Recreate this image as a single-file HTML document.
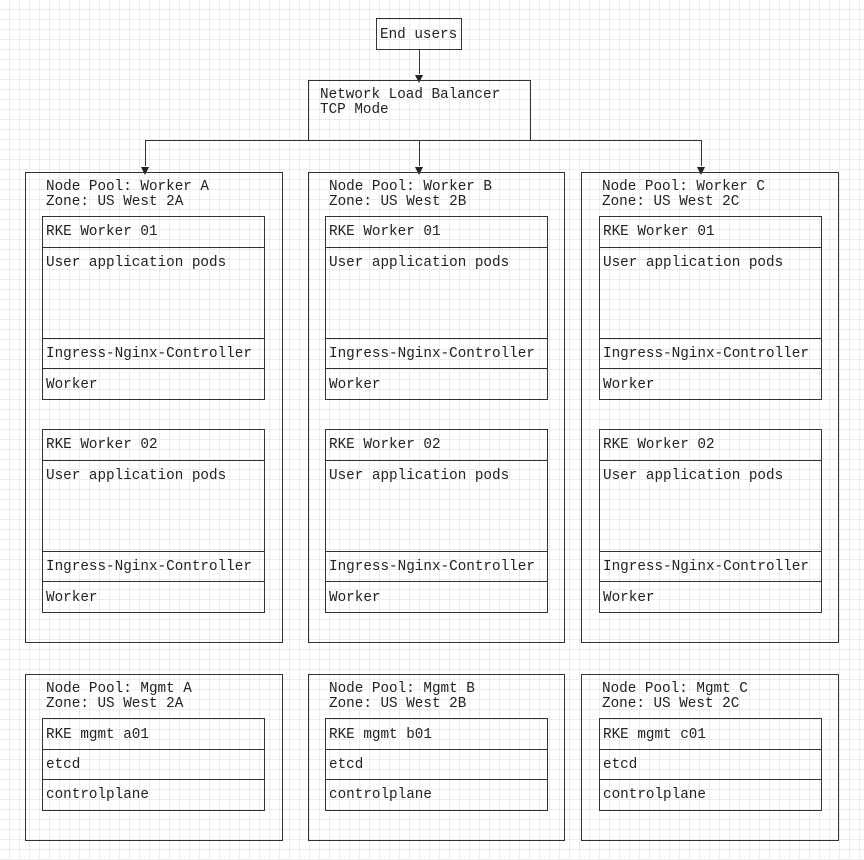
<!DOCTYPE html>
<html><head><meta charset="utf-8"><style>
body{margin:0;width:864px;height:860px;position:relative;overflow:hidden;background:#fff;
background-image:linear-gradient(#ececec 1px,transparent 1px),linear-gradient(90deg,#ececec 1px,transparent 1px);background-size:10px 10px;background-position:-1px -1px;
font-family:"Liberation Mono",monospace;font-size:14.3px;color:#222}
.b{position:absolute;border:1px solid #333;box-sizing:border-box}
.t{position:absolute;white-space:pre;line-height:15px}
.h{position:absolute;height:1px;background:#333}
.v{position:absolute;width:1px;background:#333}
.a{position:absolute;width:0;height:0;border-left:4px solid transparent;border-right:4px solid transparent;border-top:8px solid #222}
</style></head><body>
<div class="b" style="left:376px;top:18px;width:86px;height:32px"></div>
<div class="t" style="left:380px;top:28px">End users</div>
<div class="v" style="left:419px;top:50px;height:24px"></div>
<div class="a" style="left:415px;top:75px"></div>
<div class="b" style="left:308px;top:80px;width:223px;height:61px;border-bottom:none"></div>
<div class="t" style="left:320px;top:88px">Network Load Balancer
TCP Mode</div>
<div class="h" style="left:145px;top:140px;width:557px"></div>
<div class="v" style="left:145px;top:140px;height:26px"></div>
<div class="v" style="left:419px;top:140px;height:26px"></div>
<div class="v" style="left:701px;top:140px;height:26px"></div>
<div class="a" style="left:141px;top:167px"></div>
<div class="a" style="left:415px;top:167px"></div>
<div class="a" style="left:697px;top:167px"></div>
<div id="c"></div>
<script>
var pools=[[25,258,42,"A","a"],[308,257,325,"B","b"],[581,258,599,"C","c"]],h="";
pools.forEach(function(p){
var x=p[0],w=p[1],ix=p[2],tx=ix+4;
h+='<div class="b" style="left:'+x+'px;top:172px;width:'+w+'px;height:471px"></div>';
h+='<div class="t" style="left:'+(x+21)+'px;top:180px">Node Pool: Worker '+p[3]+'\nZone: US West 2'+p[3]+'</div>';
[[216,"01"],[429,"02"]].forEach(function(q){var y=q[0];
h+='<div class="b" style="left:'+ix+'px;top:'+y+'px;width:223px;height:184px"></div>';
[31,122,152].forEach(function(d){h+='<div class="h" style="left:'+ix+'px;top:'+(y+d)+'px;width:223px"></div>'});
h+='<div class="t" style="left:'+tx+'px;top:'+(y+9)+'px">RKE Worker '+q[1]+'</div>';
h+='<div class="t" style="left:'+tx+'px;top:'+(y+40)+'px">User application pods</div>';
h+='<div class="t" style="left:'+tx+'px;top:'+(y+131)+'px">Ingress-Nginx-Controller</div>';
h+='<div class="t" style="left:'+tx+'px;top:'+(y+162)+'px">Worker</div>';
});
h+='<div class="b" style="left:'+x+'px;top:674px;width:'+w+'px;height:167px"></div>';
h+='<div class="t" style="left:'+(x+21)+'px;top:682px">Node Pool: Mgmt '+p[3]+'\nZone: US West 2'+p[3]+'</div>';
h+='<div class="b" style="left:'+ix+'px;top:718px;width:223px;height:93px"></div>';
h+='<div class="h" style="left:'+ix+'px;top:749px;width:223px"></div><div class="h" style="left:'+ix+'px;top:779px;width:223px"></div>';
h+='<div class="t" style="left:'+tx+'px;top:728px">RKE mgmt '+p[4]+'01</div>';
h+='<div class="t" style="left:'+tx+'px;top:758px">etcd</div>';
h+='<div class="t" style="left:'+tx+'px;top:788px">controlplane</div>';
});
document.getElementById("c").innerHTML=h;
</script>
</body></html>
